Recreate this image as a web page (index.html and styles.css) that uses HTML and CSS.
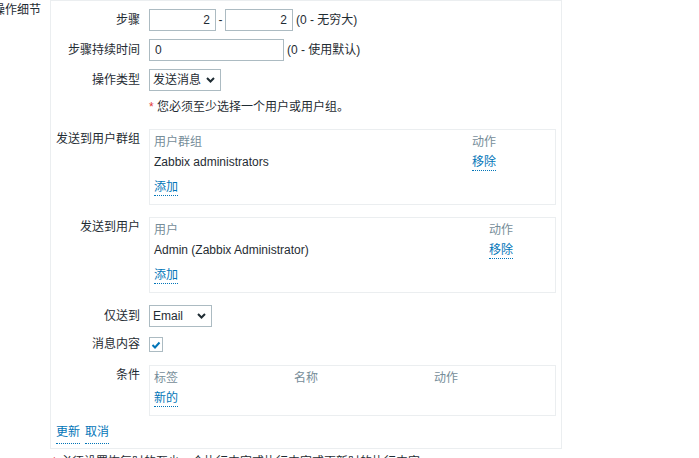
FILE: index.html
```html
<!DOCTYPE html>
<html lang="zh-CN">
<head>
<meta charset="utf-8">
<title>操作细节</title>
<link rel="stylesheet" href="styles.css">
</head>
<body>
<div class="page">
  <div class="outer-label"><span>操作细节</span></div>
  <div class="panel">
    <div class="row">
      <div class="lbl">步骤</div>
      <div class="val">
        <input class="input num w67" type="text" value="2"><span class="dash">-</span><input class="input num w68" type="text" value="2"><span class="hint">(0 - 无穷大)</span>
      </div>
    </div>
    <div class="row gap8">
      <div class="lbl">步骤持续时间</div>
      <div class="val">
        <input class="input w135" type="text" value="0"><span class="hint">(0 - 使用默认)</span>
      </div>
    </div>
    <div class="row gap8">
      <div class="lbl">操作类型</div>
      <div class="val">
        <div class="select w72"><span>发送消息</span><svg class="chev" width="9" height="6" viewBox="0 0 9 6"><path d="M1 1l3.5 3.5L8 1" fill="none" stroke="#1f2c33" stroke-width="2"/></svg></div>
      </div>
    </div>
    <div class="row gap8 note-row">
      <div class="lbl"></div>
      <div class="note"><span class="req">*</span> 您必须至少选择一个用户或用户组。</div>
    </div>
    <div class="row table-row gap14">
      <div class="lbl">发送到用户群组</div>
      <div class="val">
        <div class="tbl">
          <div class="tr cols-grp th"><span>用户群组</span><span>动作</span></div>
          <div class="tr cols-grp"><span>Zabbix administrators</span><span><a class="link" href="#">移除</a></span></div>
          <div class="tr add"><span><a class="link" href="#">添加</a></span></div>
        </div>
      </div>
    </div>
    <div class="row table-row gap12">
      <div class="lbl">发送到用户</div>
      <div class="val">
        <div class="tbl">
          <div class="tr cols-usr th"><span>用户</span><span>动作</span></div>
          <div class="tr cols-usr"><span>Admin (Zabbix Administrator)</span><span><a class="link" href="#">移除</a></span></div>
          <div class="tr add"><span><a class="link" href="#">添加</a></span></div>
        </div>
      </div>
    </div>
    <div class="row gap12">
      <div class="lbl">仅送到</div>
      <div class="val">
        <div class="select w63"><span>Email</span><svg class="chev" width="9" height="6" viewBox="0 0 9 6"><path d="M1 1l3.5 3.5L8 1" fill="none" stroke="#1f2c33" stroke-width="2"/></svg></div>
      </div>
    </div>
    <div class="row gap6">
      <div class="lbl">消息内容</div>
      <div class="val">
        <span class="checkbox"><svg width="10" height="8" viewBox="0 0 10 8"><path d="M1.5 4l2.5 2.5L8.5 1.5" fill="none" stroke="#0275b8" stroke-width="2"/></svg></span>
      </div>
    </div>
    <div class="row table-row gap10">
      <div class="lbl">条件</div>
      <div class="val">
        <div class="tbl">
          <div class="tr cols-cond th"><span>标签</span><span>名称</span><span>动作</span></div>
          <div class="tr"><span><a class="link" href="#">新的</a></span></div>
        </div>
      </div>
    </div>
    <div class="footer"><a class="link" href="#">更新</a><a class="link" href="#">取消</a></div>
  </div>
  <div></div>
  <div class="foot-note"><span class="req">*</span> 必须设置恢复时的至少一个执行内容或执行内容或更新时的执行内容。</div>
</div>
</body>
</html>
```
FILE: styles.css
```css
html, body {
  margin: 0;
  padding: 0;
  overflow: hidden;
  background: #ffffff;
}
body {
  font-family: "Liberation Sans", Arial, "Noto Sans CJK SC", sans-serif;
  font-size: 12px;
  line-height: 16px;
  color: #1f2c33;
}
.page {
  display: grid;
  grid-template-columns: 41px 512px;
  column-gap: 9px;
  align-items: start;
}
.outer-label {
  display: flex;
  justify-content: flex-end;
  white-space: nowrap;
  line-height: 20px;
}
.panel {
  box-sizing: border-box;
  border: 1px solid #ebeef0;
  padding: 8px 5px 4px 5px;
}
.row {
  display: grid;
  grid-template-columns: 84px 407px;
  column-gap: 9px;
  align-items: start;
}
.gap6 { margin-top: 6px; }
.gap8 { margin-top: 8px; }
.gap10 { margin-top: 10px; }
.gap12 { margin-top: 12px; }
.gap14 { margin-top: 14px; }
.lbl {
  text-align: right;
  white-space: nowrap;
  line-height: 22px;
}
.table-row .lbl { line-height: 20px; }
.note-row .lbl { line-height: 16px; }
.val {
  display: flex;
  align-items: center;
  min-height: 22px;
  white-space: nowrap;
}
.note {
  display: block;
  line-height: 16px;
  white-space: nowrap;
}
.req { color: #e33734; }
.input {
  box-sizing: border-box;
  height: 22px;
  border: 1px solid #acbbc2;
  background: #ffffff;
  color: #1f2c33;
  font: inherit;
  padding: 0 5px;
  margin: 0;
  outline: none;
}
.num { text-align: right; }
.w67 { width: 67px; }
.w68 { width: 68px; }
.w135 { width: 135px; }
.w72 { width: 72px; }
.w63 { width: 63px; }
.dash {
  width: 9px;
  text-align: center;
}
.hint { margin-left: 3px; }
.select {
  box-sizing: border-box;
  height: 22px;
  border: 1px solid #acbbc2;
  display: flex;
  align-items: center;
  justify-content: space-between;
  padding: 0 5px 0 3px;
  background: #ffffff;
}
.chev { display: block; }
.checkbox {
  box-sizing: border-box;
  width: 14px;
  height: 15px;
  border: 1px solid #acbbc2;
  display: flex;
  align-items: center;
  justify-content: center;
  padding-top: 1px;
}
.checkbox svg { display: block; }
.tbl {
  box-sizing: border-box;
  width: 407px;
  border: 1px solid #ebeef0;
  padding: 2px 4px 7px 4px;
}
.tr {
  display: grid;
  grid-template-columns: auto;
  line-height: 20px;
}
.cols-grp { grid-template-columns: 318px auto; }
.cols-usr { grid-template-columns: 335px auto; }
.cols-cond { grid-template-columns: 140px 140px auto; }
.th { color: #768d99; }
.add { margin-top: 5px; }
.link {
  color: #0275b8;
  text-decoration: none;
  border-bottom: 1px dotted #0275b8;
  padding-bottom: 1px;
}
.footer {
  margin-top: 6px;
  line-height: 20px;
  display: flex;
  gap: 5px;
}
.foot-note {
  margin-top: 5px;
  padding-left: 2px;
  white-space: nowrap;
  line-height: 16px;
}
```
